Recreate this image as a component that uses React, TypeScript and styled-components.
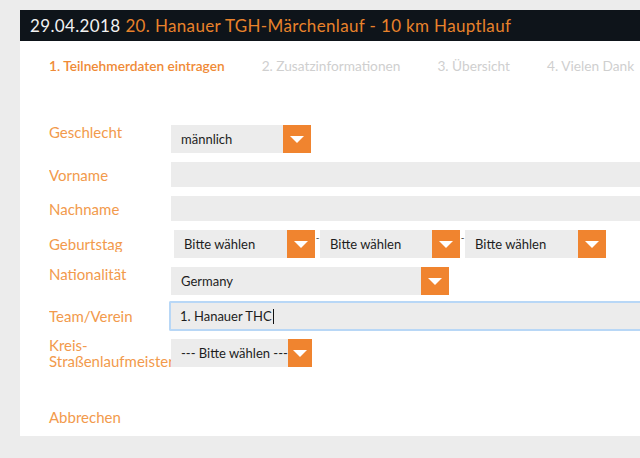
import React from "react";
import styled, { createGlobalStyle } from "styled-components";

const Global = createGlobalStyle`
  html, body { margin: 0; padding: 0; background: #ececec; overflow: hidden; }
  body { font-family: Lato, "Open Sans", sans-serif; }
`;

const Page = styled.div`
  width: 640px;
  height: 458px;
  padding: 10px 0 0 20px;
  box-sizing: border-box;
  overflow: hidden;
`;

const Card = styled.div`
  width: 660px;
  height: 426px;
  background: #fff;
  display: flex;
  flex-direction: column;
`;

const Header = styled.div`
  height: 31px;
  background: #0e141a;
  display: flex;
  align-items: center;
  padding-left: 10px;
  font-size: 17px;
  letter-spacing: 0.35px;
  white-space: nowrap;
`;

const HeaderDate = styled.span`
  color: #f2f2f2;
  margin-right: 5px;
`;

const HeaderTitle = styled.span`
  color: #e8822b;
`;

const Steps = styled.div`
  display: flex;
  gap: 37px;
  padding: 17px 0 0 29px;
  font-size: 13.7px;
  line-height: 16px;
  white-space: nowrap;
`;

const Step = styled.span<{ $active?: boolean }>`
  color: ${(p) => (p.$active ? "#ef8a36" : "#cfcfcf")};
  font-weight: ${(p) => (p.$active ? 600 : 400)};
`;

const Form = styled.div`
  display: flex;
  flex-direction: column;
  padding: 51px 0 0 29px;
`;

const Row = styled.div<{ $mt?: number }>`
  display: flex;
  align-items: center;
  margin-top: ${(p) => p.$mt ?? 0}px;
`;

const Label = styled.div<{ $top?: boolean; $shift?: number }>`
  width: 122px;
  flex: none;
  color: #f29a4c;
  font-size: 15px;
  line-height: 16px;
  align-self: ${(p) => (p.$top ? "flex-start" : "center")};
  margin-top: ${(p) => p.$shift ?? 0}px;
  white-space: nowrap;
  overflow: hidden;
`;

const Controls = styled.div`
  display: flex;
  align-items: flex-start;
`;

const SelectBox = styled.div<{ $w: number; $h?: number; $ml?: number }>`
  width: ${(p) => p.$w}px;
  height: ${(p) => p.$h ?? 28}px;
  margin-left: ${(p) => p.$ml ?? 0}px;
  background: #ececec;
  display: flex;
  align-items: center;
  flex: none;
`;

const SelectText = styled.span`
  flex: 1;
  padding-left: 10px;
  font-size: 13px;
  color: #1d1d1d;
  white-space: nowrap;
`;

const Arrow = styled.div`
  width: 28px;
  height: 100%;
  background: #f0842f;
  display: flex;
  align-items: center;
  justify-content: center;
`;

const Tri = styled.div`
  width: 0;
  height: 0;
  border-left: 7px solid transparent;
  border-right: 7px solid transparent;
  border-top: 7px solid #fff;
`;

const Dash = styled.span`
  width: 5px;
  font-size: 10px;
  line-height: 10px;
  color: #333;
  text-align: center;
  margin-top: 2px;
`;

const Input = styled.div<{ $focus?: boolean; $h: number }>`
  flex: 1;
  width: 520px;
  height: ${(p) => p.$h}px;
  box-sizing: border-box;
  background: #ececec;
  border: ${(p) => (p.$focus ? "2px solid #b8d7f6" : "none")};
  border-right: none;
  border-radius: ${(p) => (p.$focus ? "2px 0 0 2px" : "0")};
  margin-left: ${(p) => (p.$focus ? -2 : 0)}px;
  display: flex;
  align-items: center;
  padding-left: 9px;
  font-size: 13px;
  color: #1d1d1d;
`;

const Caret = styled.span`
  display: inline-block;
  width: 1px;
  height: 15px;
  background: #111;
  margin-left: 1px;
`;

const Cancel = styled.div`
  color: #f29a4c;
  font-size: 15px;
  padding: 39px 0 0 29px;
`;

function Select({ text, w, ml }: { text: string; w: number; ml?: number }) {
  return (
    <SelectBox $w={w} $ml={ml}>
      <SelectText>{text}</SelectText>
      <Arrow>
        <Tri />
      </Arrow>
    </SelectBox>
  );
}

export default function App() {
  return (
    <>
      <Global />
      <Page>
        <Card>
          <Header>
            <HeaderDate>29.04.2018</HeaderDate>
            <HeaderTitle>20. Hanauer TGH-Märchenlauf - 10 km Hauptlauf</HeaderTitle>
          </Header>
          <Steps>
            <Step $active>1. Teilnehmerdaten eintragen</Step>
            <Step>2. Zusatzinformationen</Step>
            <Step>3. Übersicht</Step>
            <Step>4. Vielen Dank</Step>
          </Steps>
          <Form>
            <Row>
              <Label $top $shift={-1}>Geschlecht</Label>
              <Select text="männlich" w={140} />
            </Row>
            <Row $mt={9}>
              <Label>Vorname</Label>
              <Input $h={25} />
            </Row>
            <Row $mt={9}>
              <Label>Nachname</Label>
              <Input $h={25} />
            </Row>
            <Row $mt={9}>
              <Label>Geburtstag</Label>
              <Controls>
                <Select text="Bitte wählen" w={141} ml={3} />
                <Dash>-</Dash>
                <Select text="Bitte wählen" w={140} />
                <Dash>-</Dash>
                <Select text="Bitte wählen" w={141} />
              </Controls>
            </Row>
            <Row $mt={9}>
              <Label $top $shift={-1}>Nationalität</Label>
              <Select text="Germany" w={278} />
            </Row>
            <Row $mt={6}>
              <Label>Team/Verein</Label>
              <Input $h={30} $focus>
                1. Hanauer THC<Caret />
              </Input>
            </Row>
            <Row $mt={6}>
              <Label>
                Kreis-
                <br />
                Straßenlaufmeister
              </Label>
              <Select text="--- Bitte wählen ---" w={141} />
            </Row>
          </Form>
          <Cancel>Abbrechen</Cancel>
        </Card>
      </Page>
    </>
  );
}
